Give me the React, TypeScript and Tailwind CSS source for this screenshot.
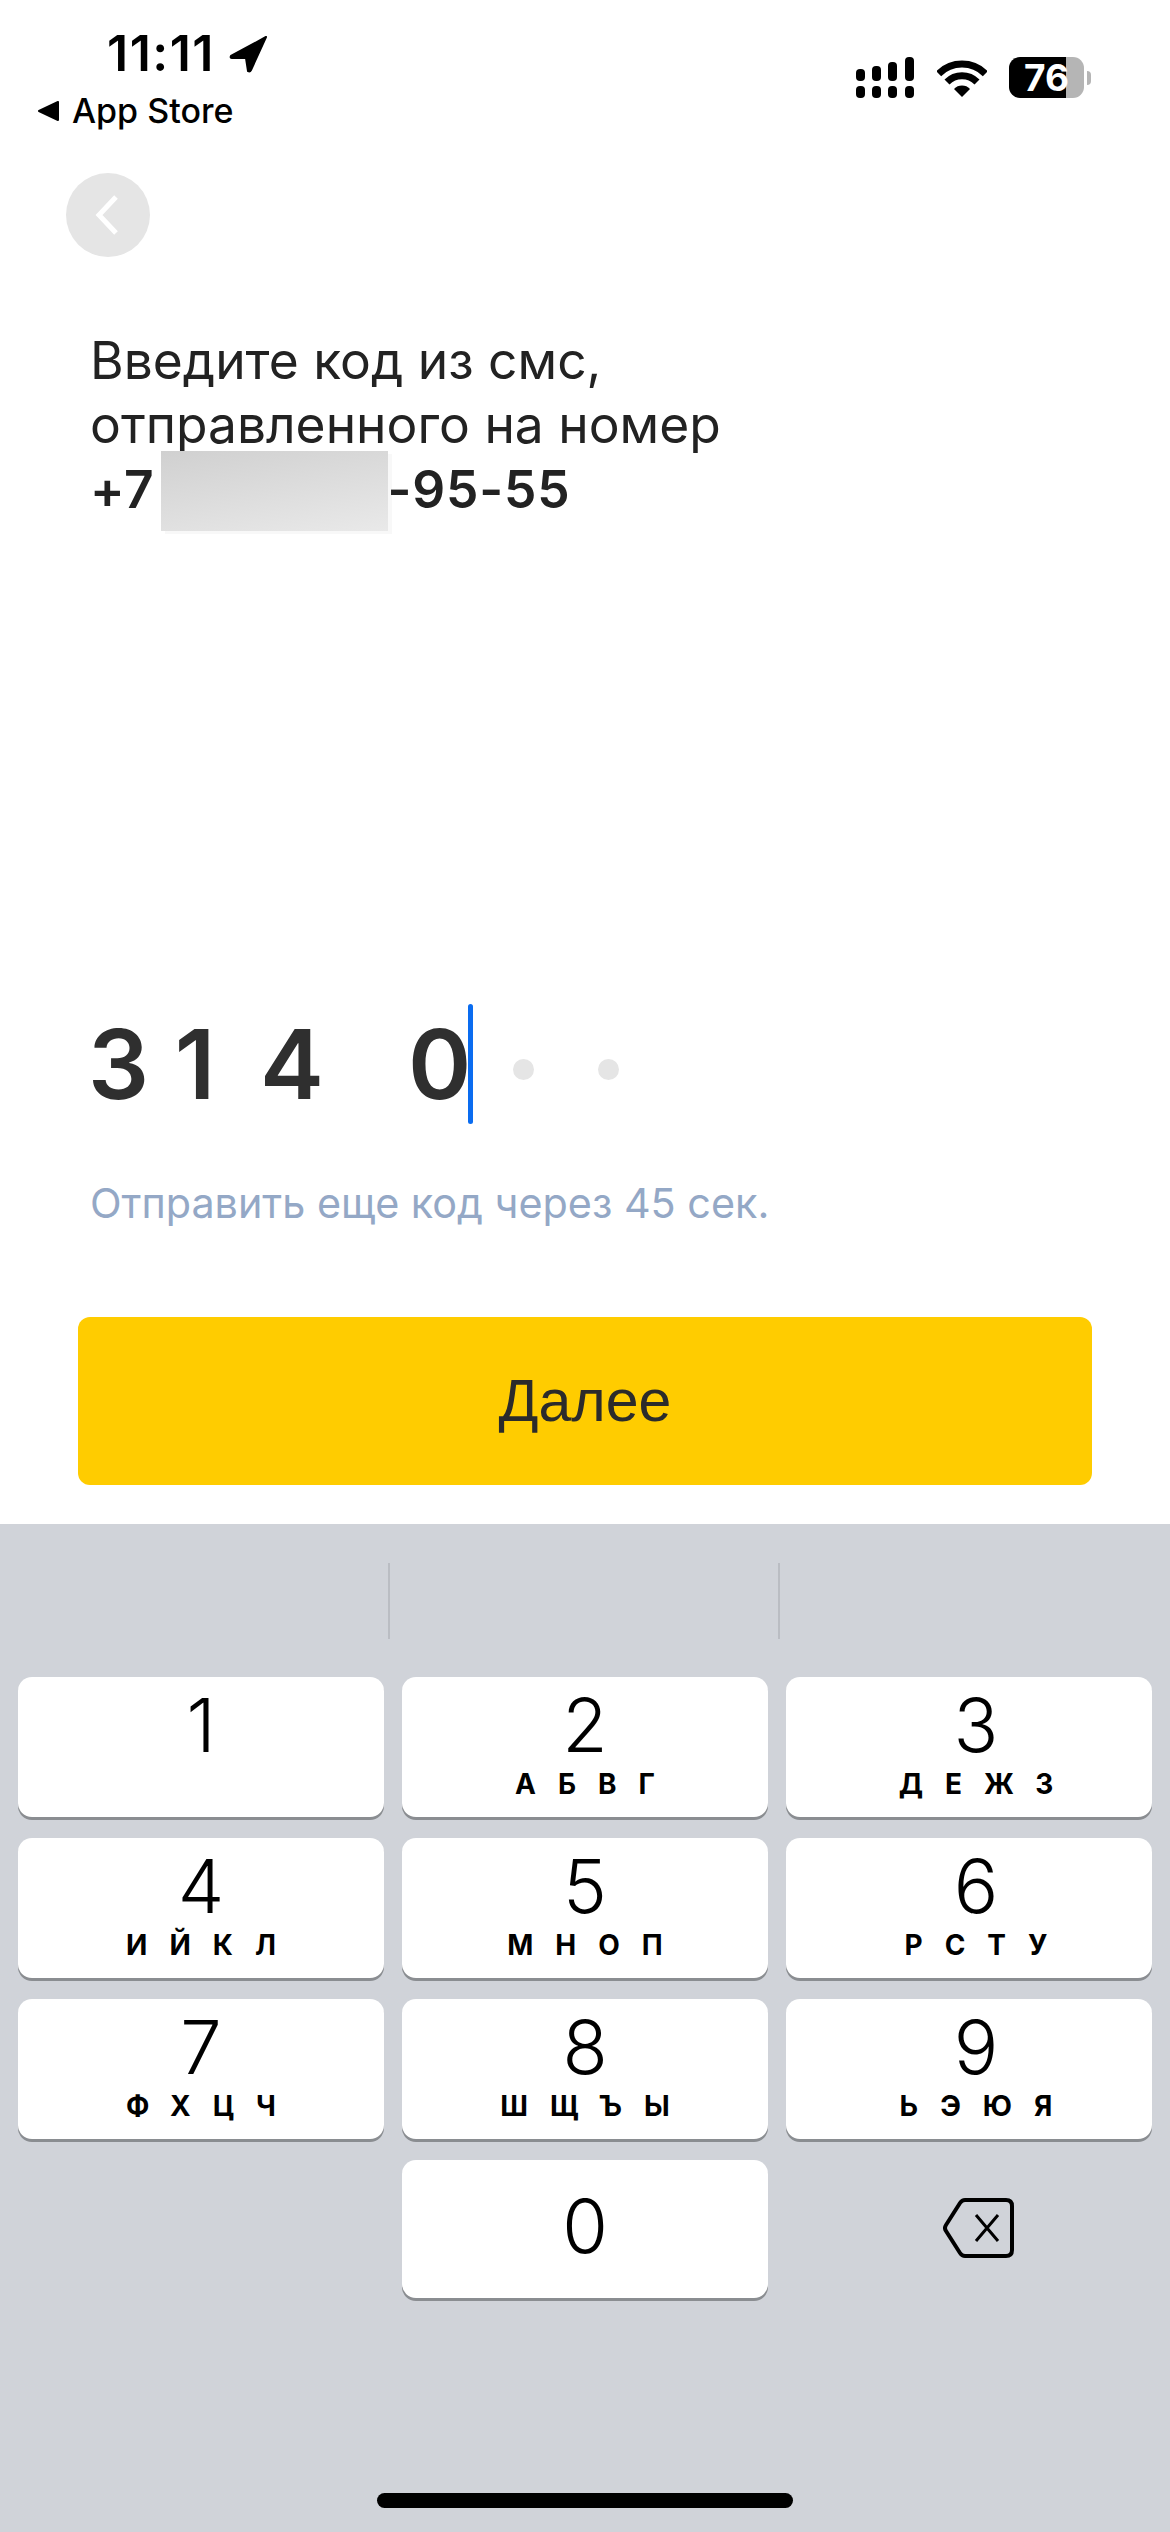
import React from "react";

const keys: [string, string][] = [
  ["1", ""],
  ["2", "АБВГ"],
  ["3", "ДЕЖЗ"],
  ["4", "ИЙКЛ"],
  ["5", "МНОП"],
  ["6", "РСТУ"],
  ["7", "ФХЦЧ"],
  ["8", "ШЩЪЫ"],
  ["9", "ЬЭЮЯ"],
];

function Key({ d, l, shift }: { d: string; l: string; shift: boolean }) {
  return (
    <div className={shift ? "h-[140px] rounded-[14px] bg-white shadow-[0_3px_0_#8a8d91] flex flex-col items-center pt-[10px] pl-[14px]" : "h-[140px] rounded-[14px] bg-white shadow-[0_3px_0_#8a8d91] flex flex-col items-center pt-[10px]"}>
      <div className="text-[74px] leading-[76px] font-[350] text-black font-['Inter',sans-serif]">{d}</div>
      {l && (
        <div className="mt-[6px] text-[28px] leading-[30px] font-bold tracking-[22px] mr-[-22px] text-black font-['Inter',sans-serif]">
          {l}
        </div>
      )}
    </div>
  );
}

export default function App() {
  return (
    <div className="w-[1170px] h-[2532px] bg-white flex flex-col overflow-hidden font-['Inter',sans-serif]">
      {/* Status bar */}
      <div className="h-[173px] flex justify-between items-start pr-[79px]">
        <div className="flex flex-col pl-[37px] pt-[28px]">
          <div className="flex items-center pl-[70px] h-[50px]">
            <span className="text-[50px] leading-[50px] font-semibold text-black tracking-[1.5px]">11:11</span>
            <svg className="ml-[14px] mt-[2px]" width="39" height="38" viewBox="0 0 39 38">
              <path d="M37 2 L2 21 Q1 23 3 23 L17 23 L19 36 Q21 37 22 35 Z" fill="#000" stroke="#000" strokeWidth="2" strokeLinejoin="round" />
            </svg>
          </div>
          <div className="flex items-center mt-[17px] h-[32px]">
            <svg width="23" height="20" viewBox="0 0 23 20">
              <path d="M2 10 L21 1 L21 19 Z" fill="#000" stroke="#000" strokeWidth="2" strokeLinejoin="round" />
            </svg>
            <span className="ml-[12px] text-[34px] leading-[32px] font-medium text-black">App Store</span>
          </div>
        </div>
        <div className="flex items-center pt-[57px]">
          <svg width="58" height="41" viewBox="0 0 58 41">
            <rect x="0" y="12" width="9" height="12" rx="4" />
            <rect x="16" y="9" width="9" height="15" rx="4" />
            <rect x="32" y="5" width="9" height="19" rx="4" />
            <rect x="49" y="0" width="9" height="24" rx="4" />
            <rect x="0" y="29" width="9" height="12" rx="4" />
            <rect x="16" y="29" width="9" height="12" rx="4" />
            <rect x="32" y="29" width="9" height="12" rx="4" />
            <rect x="49" y="29" width="9" height="12" rx="4" />
          </svg>
          <svg className="ml-[23px]" width="50" height="38" viewBox="0 0 50 38">
            <path d="M1.7 14.7 A33 33 0 0 1 48.3 14.7" fill="none" stroke="#000" strokeWidth="7" />
            <path d="M10 23 A21 21 0 0 1 40 23" fill="none" stroke="#000" strokeWidth="7" />
            <path d="M25 38 L17 30 A11 11 0 0 1 33 30 Z" fill="#000" />
          </svg>
          <div className="ml-[22px] w-[75px] h-[41px] rounded-[11px] bg-[linear-gradient(90deg,#000_0,#000_57px,#b5b5b5_57px)] flex items-center justify-center text-white text-[37px] leading-[41px] font-bold">
            76
          </div>
          <div className="ml-[3px] w-[4px] h-[14px] rounded-r-full bg-[#b5b5b5]" />
        </div>
      </div>

      {/* Back button */}
      <div className="pl-[66px]">
        <div className="w-[84px] h-[84px] rounded-full bg-[#e5e5e5] flex items-center justify-center pr-[2px]">
          <svg width="24" height="40" viewBox="0 0 24 40">
            <path d="M21 2 L4 20 L21 38" fill="none" stroke="#fff" strokeWidth="5" />
          </svg>
        </div>
      </div>

      {/* Heading */}
      <div className="pl-[90px] mt-[71px] text-[51.5px] leading-[64px] text-[#222222]">
        <div>Введите код из смс,</div>
        <div>отправленного на номер</div>
        <div className="flex items-center h-[64px] mt-[1px] font-semibold tracking-[0.8px]">
          <span>+7</span>
          <div className="ml-[6px] mt-[4px] w-[227px] h-[80px] shrink-0 bg-[linear-gradient(170deg,#d0d0d0,#e9e9e9)] shadow-[4px_3px_0_#f8f8f8]" />
          <span>-95-55</span>
        </div>
      </div>

      {/* Code */}
      <div className="pl-[88px] mt-[483px] h-[120px] flex items-center text-[96px] leading-[120px] font-semibold text-[#2f2f2f]">
        <div className="w-[56px] text-center">3</div>
        <div className="w-[56px] ml-[23px] text-center">1</div>
        <div className="w-[56px] ml-[37px] text-center">4</div>
        <div className="w-[56px] ml-[92px] text-center">0</div>
        <div className="ml-[4px] w-[5px] h-[120px] rounded-full bg-[#0a6cf0]" />
        <div className="ml-[40px] mt-[10px] w-[21px] h-[21px] rounded-full bg-[#e5e5e5]" />
        <div className="ml-[64px] mt-[10px] w-[21px] h-[21px] rounded-full bg-[#e5e5e5]" />
      </div>

      <div className="pl-[90px] mt-[55px] text-[41.3px] leading-[48px] text-[#94a8c6]">Отправить еще код через 45 сек.</div>

      {/* Button */}
      <div className="px-[78px] mt-[90px]">
        <div className="h-[168px] rounded-[12px] bg-[#ffcc00] flex items-center justify-center text-[59px] text-[#2b2b2b] font-['Liberation_Sans',sans-serif]">Далее</div>
      </div>

      {/* Keyboard */}
      <div className="mt-[39px] flex-1 bg-[#d0d3d9] flex flex-col">
        <div className="h-[153px] flex pt-[39px] pl-[388px]">
          <div className="w-[2px] h-[76px] bg-[#babdc3]" />
          <div className="w-[2px] h-[76px] ml-[388px] bg-[#babdc3]" />
        </div>
        <div className="grid grid-cols-3 gap-x-[18px] gap-y-[21px] px-[18px]">
          {keys.map(([d, l], i) => (
            <Key key={d} d={d} l={l} shift={i % 3 === 2} />
          ))}
          <div />
          <div className="h-[138px] pb-[6px] rounded-[14px] bg-white shadow-[0_3px_0_#8a8d91] flex items-center justify-center text-[74px] font-[350] text-black">0</div>
          <div className="flex items-center justify-center pb-[3px]">
            <svg width="71" height="60" viewBox="0 0 71 60" className="ml-[18px]">
              <path d="M22 2 H63 Q69 2 69 8 V52 Q69 58 63 58 H22 Q19 58 17 55 L3 33 Q1 30 3 27 L17 5 Q19 2 22 2 Z" fill="none" stroke="#000" strokeWidth="4" />
              <path d="M33 17 L55 43 M55 17 L33 43" fill="none" stroke="#000" strokeWidth="3" />
            </svg>
          </div>
        </div>
        <div className="mt-[195px] mx-auto w-[416px] h-[15px] rounded-full bg-black" />
      </div>
    </div>
  );
}
